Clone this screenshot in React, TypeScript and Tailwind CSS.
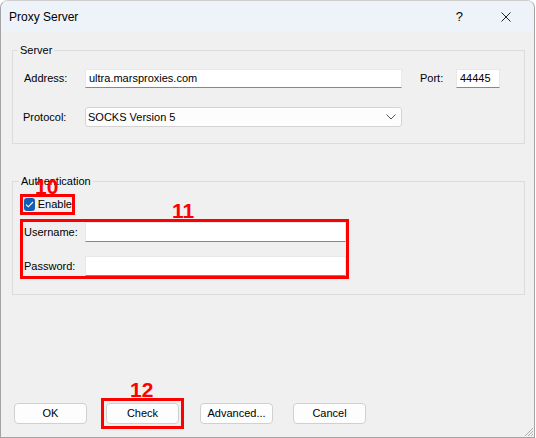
import React from 'react';

const font = "[font-family:'Liberation_Sans',Arial,sans-serif]";

function TextBox({ value, className }: { value?: string; className: string }) {
  return (
    <div
      className={`h-[19px] bg-white border border-[#e8e8e8] border-b-[#878787] flex items-center pl-[3px] text-[11px] text-black ${className}`}
    >
      {value}
    </div>
  );
}

function Button({ label }: { label: string }) {
  return (
    <div className="w-[73px] h-[21px] rounded-[4px] border border-[#d0d0d0] bg-[#fdfdfd] flex items-center justify-center text-[11px] text-black">
      {label}
    </div>
  );
}

function Marker({ n, className }: { n: string; className: string }) {
  return (
    <span className={`absolute text-[21px] leading-none font-bold text-[#ff0000] ${className}`}>{n}</span>
  );
}

export default function App() {
  return (
    <div
      className={`${font} relative w-[535px] h-[438px] bg-[#f0f0f0] border border-[#a3a3a3] border-t-[#cdcdcd] rounded-t-[8px] overflow-hidden flex flex-col`}
    >
      {/* title bar */}
      <div className="h-[31px] bg-[#eef3f9] flex items-center pl-[8px] shrink-0">
        <span className="text-[12px] text-black">Proxy Server</span>
        <span className="ml-auto text-[13px] text-black">?</span>
        <svg className="ml-[38px] mr-[23px]" width="10" height="10" viewBox="0 0 10 10">
          <path d="M0.5 0.5 L9.5 9.5 M9.5 0.5 L0.5 9.5" stroke="#222" strokeWidth="1" />
        </svg>
      </div>

      <div className="pl-[11px] pr-[9px] flex flex-col text-[11px] text-black">
        {/* server group */}
        <fieldset className="mt-[11px] border border-[#dcdcdc] pl-[11px] pt-[12px] pb-[16px]">
          <legend className="-ml-[6px] px-[2px] leading-[14px]">Server</legend>
          <div className="flex items-center h-[19px]">
            <span className="w-[61px]">Address:</span>
            <TextBox value="ultra.marsproxies.com" className="w-[317px]" />
            <span className="ml-[18px] w-[36px]">Port:</span>
            <TextBox value="44445" className="w-[44px]" />
          </div>
          <div className="flex items-center h-[20px] mt-[19px]">
            <span className="w-[61px] -ml-[1px] mr-[1px]">Protocol:</span>
            <div className="w-[317px] h-[20px] bg-[#fdfdfd] border border-[#d3d3d3] rounded-[3px] flex items-center pl-[2px] pr-[5px]">
              <span>SOCKS Version 5</span>
              <svg className="ml-auto" width="10" height="6" viewBox="0 0 10 6">
                <path d="M0.5 0.5 L5 5 L9.5 0.5" fill="none" stroke="#555" strokeWidth="1" />
              </svg>
            </div>
          </div>
        </fieldset>

        {/* authentication group */}
        <fieldset className="mt-[30px] border border-[#dcdcdc] pl-[7px] pt-[6px] pb-[15px]">
          <legend className="-ml-[1px] px-[2px] leading-[14px]">Authentication</legend>
          <div className="relative self-start w-[55px] h-[21px] border-[3px] border-[#ff0000] flex items-center pl-[1px]">
            <span className="w-[13px] h-[13px] rounded-[3px] bg-[#0f5fb4] flex items-center justify-center">
              <svg width="9" height="7" viewBox="0 0 9 7">
                <path d="M1 3.6 L3.3 5.8 L8 1" fill="none" stroke="#fff" strokeWidth="1.1" />
              </svg>
            </span>
            <span className="ml-[3px]">Enable</span>
            <Marker n="10" className="left-[12px] -top-[21px]" />
          </div>
          <div className="relative mt-[4px] w-[329px] border-[3px] border-[#ff0000] flex flex-col gap-[14px] pl-[1px]">
            <div className="flex items-center h-[20px]">
              <span className="w-[61px]">Username:</span>
              <TextBox className="w-[261px] h-[20px]" />
            </div>
            <div className="flex items-center h-[20px]">
              <span className="w-[61px]">Password:</span>
              <TextBox className="w-[261px] h-[20px]" />
            </div>
            <Marker n="11" className="left-[149px] -top-[22px]" />
          </div>
        </fieldset>

        {/* buttons */}
        <div className="flex items-center mt-[103px] pl-[2px]">
          <Button label="OK" />
          <div className="relative ml-[14px] w-[83px] h-[31px] border-[3px] border-[#ff0000] flex items-center justify-center">
            <Button label="Check" />
            <Marker n="12" className="left-[26px] -top-[22px]" />
          </div>
          <div className="ml-[16px]">
            <Button label="Advanced..." />
          </div>
          <div className="ml-[20px]">
            <Button label="Cancel" />
          </div>
        </div>
      </div>

      {/* size grip */}
      <svg className="absolute right-[1px] bottom-[1px]" width="9" height="9" viewBox="0 0 9 9">
        <path d="M9 1 L1 9 M9 4 L4 9 M9 7 L7 9" stroke="#b0b0b0" strokeWidth="1" />
      </svg>
    </div>
  );
}
